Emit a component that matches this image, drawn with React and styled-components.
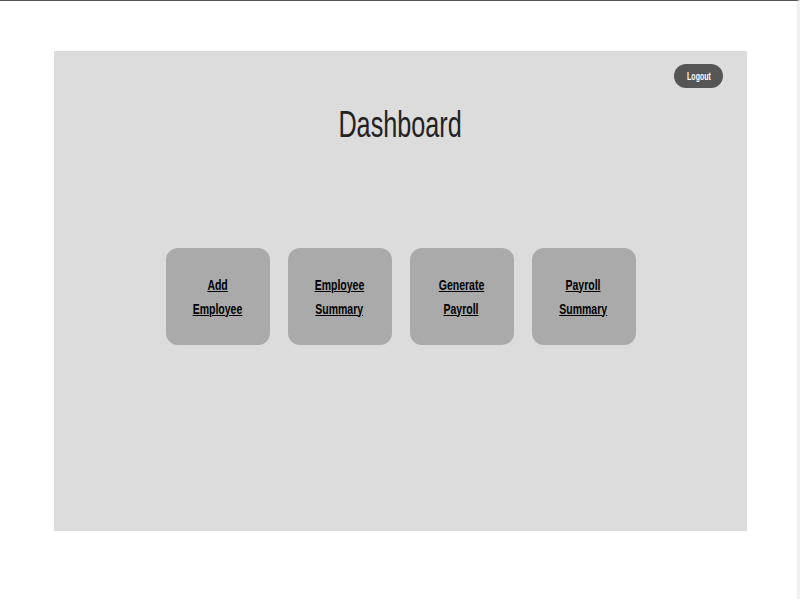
import React from 'react';
import styled, { createGlobalStyle } from 'styled-components';

const GlobalStyle = createGlobalStyle`
  html, body {
    margin: 0;
    padding: 0;
    background: #fff;
  }
  body {
    font-family: "Liberation Sans", Arial, sans-serif;
    border-top: 1px solid #555;
    border-right: 3px solid #f0f0f0;
    height: 599px;
    box-sizing: border-box;
  }
`;

// the original uses a condensed face; squeeze Liberation Sans to match
const Narrow = styled.span`
  display: inline-block;
  transform: scaleX(${p => p.$x || 0.7});
  text-decoration: ${p => (p.$underline ? 'underline' : 'none')};
`;

const Page = styled.div`
  padding: 50px 0 0 54px;
`;

const Panel = styled.div`
  width: 693px;
  height: 480px;
  background: #dcdcdc;
  display: flex;
  flex-direction: column;
  align-items: center;
  box-sizing: border-box;
  padding-top: 13px;
`;

const TopBar = styled.div`
  align-self: stretch;
  display: flex;
  justify-content: flex-end;
  padding-right: 24px;
`;

const LogoutButton = styled.button`
  width: 49px;
  height: 24px;
  border: none;
  border-radius: 12px;
  background: #555;
  color: #fff;
  font-family: "Liberation Sans", Arial, sans-serif;
  font-size: 10px;
  font-weight: bold;
  padding: 0;
  cursor: pointer;
`;

const Title = styled.h1`
  margin: 16px 0 0;
  font-weight: normal;
  font-size: 36px;
  color: #222;
`;

const Cards = styled.div`
  display: flex;
  gap: 18px;
  margin-top: 102px;
`;

const Card = styled.div`
  width: 104px;
  height: 97px;
  border-radius: 12px;
  background: #aaa;
  display: flex;
  align-items: center;
  justify-content: center;
  text-align: center;
`;

const CardLink = styled.a`
  color: #000;
  text-decoration: underline;
  font-size: 15px;
  font-weight: bold;
  line-height: 24px;
`;

const items = [
  ['Add', 'Employee'],
  ['Employee', 'Summary'],
  ['Generate', 'Payroll'],
  ['Payroll', 'Summary'],
];

export default function App() {
  return (
    <>
      <GlobalStyle />
      <Page>
        <Panel>
          <TopBar>
            <LogoutButton>
              <Narrow>Logout</Narrow>
            </LogoutButton>
          </TopBar>
          <Title>
            <Narrow>Dashboard</Narrow>
          </Title>
          <Cards>
            {items.map(([a, b]) => (
              <Card key={a + b}>
                <CardLink href="#">
                  <Narrow $underline>{a}</Narrow>
                  <br />
                  <Narrow $underline>{b}</Narrow>
                </CardLink>
              </Card>
            ))}
          </Cards>
        </Panel>
      </Page>
    </>
  );
}
